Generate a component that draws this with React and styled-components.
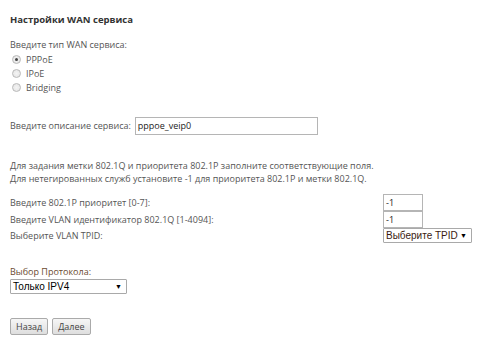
import React from "react";
import styled, { createGlobalStyle } from "styled-components";

const GlobalStyle = createGlobalStyle`
  body {
    margin: 0;
    background: #fff;
    font-family: "Open Sans", "DejaVu Sans", sans-serif;
    font-size: 9px;
    color: #555;
  }
`;

const Page = styled.div`
  padding: 13px 10px 0 10px;
  width: 491px;
  height: 356px;
  box-sizing: border-box;
  overflow: hidden;
`;

const Title = styled.div`
  font-weight: bold;
  color: #333;
  font-size: 9.5px;
  line-height: 14px;
  margin-bottom: 11px;
`;

const Label = styled.div`
  line-height: 14px;
  color: ${(p) => p.color || "#555"};
`;

const RadioList = styled.div`
  display: flex;
  flex-direction: column;
  padding-left: 2px;
`;

const RadioRow = styled.label`
  display: flex;
  align-items: center;
  gap: 5px;
  height: 14px;
`;

const Radio = styled.span`
  width: 9px;
  height: 9px;
  border-radius: 50%;
  border: 1px solid #b9b9b9;
  background: radial-gradient(circle, #f4f4f4 0%, #e2e2e2 100%);
  box-sizing: border-box;
  display: flex;
  align-items: center;
  justify-content: center;
  &::after {
    content: "";
    width: 3px;
    height: 3px;
    border-radius: 50%;
    background: ${(p) => (p.checked ? "#444" : "transparent")};
  }
`;

const DescRow = styled.div`
  display: flex;
  align-items: center;
  gap: 4px;
  margin-top: 23px;
`;

const TextInput = styled.div`
  width: ${(p) => p.w}px;
  height: ${(p) => p.h || 17}px;
  border: 1px solid #b5b5b5;
  box-sizing: border-box;
  padding-left: 2px;
  color: #222;
  line-height: 15px;
  background: #fff;
  font-size: 9px;
`;

const Para = styled.div`
  margin-top: 24px;
  line-height: 13px;
`;

const VlanGrid = styled.div`
  display: grid;
  grid-template-columns: 373px auto;
  margin-top: 9px;
  align-items: center;
`;

const SelectBox = styled.div`
  width: ${(p) => p.w}px;
  height: 15px;
  border: 1px solid #a9a9a9;
  box-sizing: border-box;
  display: flex;
  align-items: center;
  justify-content: space-between;
  padding: 0 4px 0 2px;
  font-family: "Liberation Sans", Arial, sans-serif;
  font-size: 10px;
  color: ${(p) => p.color || "#000"};
  background: #fff;
  border-radius: 1px;
`;

const Caret = styled.span`
  font-size: 7px;
  color: #000;
`;

const ProtoBlock = styled.div`
  margin-top: 22px;
`;

const Buttons = styled.div`
  display: flex;
  gap: 4px;
  margin-top: 24px;
`;

const Button = styled.button`
  height: 17px;
  padding: 0 5px;
  border: 1px solid #aaa;
  border-radius: 2px;
  background: linear-gradient(#f6f6f6, #dedede);
  font-family: "Open Sans", "DejaVu Sans", sans-serif;
  font-size: 9px;
  color: #444;
  line-height: 15px;
`;

export default function App() {
  return (
    <>
      <GlobalStyle />
      <Page>
        <Title>Настройки WAN сервиса</Title>
        <Label>Введите тип WAN сервиса:</Label>
        <RadioList>
          <RadioRow>
            <Radio checked />
            PPPoE
          </RadioRow>
          <RadioRow>
            <Radio />
            IPoE
          </RadioRow>
          <RadioRow>
            <Radio />
            Bridging
          </RadioRow>
        </RadioList>
        <DescRow>
          <Label>Введите описание сервиса:</Label>
          <TextInput w={183} h={18}>pppoe_veip0</TextInput>
        </DescRow>
        <Para>
          Для задания метки 802.1Q и приоритета 802.1P заполните соответствующие поля.
          <br />
          Для нетегированных служб установите -1 для приоритета 802.1P и метки 802.1Q.
        </Para>
        <VlanGrid>
          <Label>Введите 802.1P приоритет [0-7]:</Label>
          <TextInput w={40}>-1</TextInput>
          <Label>Введите VLAN идентификатор 802.1Q [1-4094]:</Label>
          <TextInput w={40}>-1</TextInput>
          <Label>Выберите VLAN TPID:</Label>
          <SelectBox w={89} color="#3a1a10">
            Выберите TPID <Caret>▼</Caret>
          </SelectBox>
        </VlanGrid>
        <ProtoBlock>
          <Label color="#6b4a30">Выбор Протокола:</Label>
          <SelectBox w={117}>
            Только IPV4 <Caret>▼</Caret>
          </SelectBox>
        </ProtoBlock>
        <Buttons>
          <Button>Назад</Button>
          <Button>Далее</Button>
        </Buttons>
      </Page>
    </>
  );
}
